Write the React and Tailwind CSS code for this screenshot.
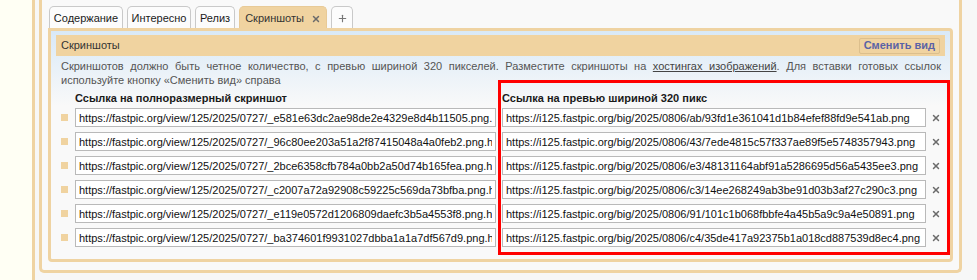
import { X, Plus } from "lucide-react";

const tabs = [
  { label: "Содержание", w: "w-[74px]" },
  { label: "Интересно", w: "w-[64px]" },
  { label: "Релиз", w: "w-[40px]" },
];

const rows = [
  ["https://fastpic.org/view/125/2025/0727/_e581e63dc2ae98de2e4329e8d4b11505.png.html", "https://i125.fastpic.org/big/2025/0806/ab/93fd1e361041d1b84efef88fd9e541ab.png"],
  ["https://fastpic.org/view/125/2025/0727/_96c80ee203a51a2f87415048a4a0feb2.png.html", "https://i125.fastpic.org/big/2025/0806/43/7ede4815c57f337ae89f5e5748357943.png"],
  ["https://fastpic.org/view/125/2025/0727/_2bce6358cfb784a0bb2a50d74b165fea.png.html", "https://i125.fastpic.org/big/2025/0806/e3/48131164abf91a5286695d56a5435ee3.png"],
  ["https://fastpic.org/view/125/2025/0727/_c2007a72a92908c59225c569da73bfba.png.html", "https://i125.fastpic.org/big/2025/0806/c3/14ee268249ab3be91d03b3af27c290c3.png"],
  ["https://fastpic.org/view/125/2025/0727/_e119e0572d1206809daefc3b5a4553f8.png.html", "https://i125.fastpic.org/big/2025/0806/91/101c1b068fbbfe4a45b5a9c9a4e50891.png"],
  ["https://fastpic.org/view/125/2025/0727/_ba374601f9931027dbba1a1a7df567d9.png.html", "https://i125.fastpic.org/big/2025/0806/c4/35de417a92375b1a018cd887539d8ec4.png"],
];

export default function App() {
  return (
    <div className="relative h-[280px] w-[977px] overflow-hidden bg-[#fffff4] pl-[32px] font-['Liberation_Sans',Arial,sans-serif] text-[11px] text-[#222]">
      <div className="h-full border-l-[3px] border-[#efd3a2] bg-[#f7f7f7] pl-[4px]">
        <div className="w-[923px] rounded-b-[5px] border-[3px] border-t-0 border-[#efd3a2] bg-[#f9f9f9] px-[6px] pt-[6px] pb-[8px]">
          {/* tabs */}
          <div className="flex h-[22px] gap-[4px] pl-px">
            {tabs.map((t) => (
              <div
                key={t.label}
                className={`${t.w} flex items-center justify-center rounded-t-[5px] border border-b-0 border-[#c9c9c9] bg-[#fcfcfc] pt-[2px] text-[#1a1a1a]`}
              >
                {t.label}
              </div>
            ))}
            <div className="flex w-[88px] items-center justify-center gap-[7px] rounded-t-[5px] border border-b-0 border-[#e8ca97] bg-[#f0d3a0] pt-[2px] text-[#333]">
              Скриншоты
              <X size={10} strokeWidth={3.5} className="text-[#6b6b6b]" />
            </div>
            <div className="flex w-[22px] items-center justify-center rounded-t-[5px] border border-b-0 border-[#c9c9c9] bg-[#fcfcfc] pt-[2px]">
              <Plus size={11} strokeWidth={2.5} className="text-[#777]" />
            </div>
          </div>

          {/* box */}
          <div className="rounded-[4px] rounded-tl-none border-[3px] border-[#efd3a2] bg-[linear-gradient(to_bottom,#d9e9f7,#f9f9f9_75px)] px-[5px] pt-[4px] pb-[12px]">
            <div className="flex h-[21px] items-center justify-between bg-[#f0d3a0] pl-[5px] pr-[5px]">
              <span className="text-[#333]">Скриншоты</span>
              <span className="flex h-[16px] items-center rounded-[2px] border border-[#dcbf8d] px-[4px] font-bold text-[#5b63a6]">
                Сменить вид
              </span>
            </div>

            <div className="mt-[3px] pl-[5px] pr-[4px] leading-[14px] text-[#555]">
              <div className="text-justify [text-align-last:justify]">
                Скриншотов должно быть четное количество, с превью шириной 320 пикселей. Разместите скриншоты на{" "}
                <span className="text-[#444] underline">хостингах изображений</span>. Для вставки готовых ссылок
              </div>
              <div>используйте кнопку «Сменить вид» справа</div>
            </div>

            <div className="mt-[4px] flex pl-[19px] font-bold leading-[14px] text-[#1a1a1a]">
              <div className="w-[427px]">Ссылка на полноразмерный скриншот</div>
              <div>Ссылка на превью шириной 320 пикс</div>
            </div>

            <div className="mt-[3px] flex flex-col gap-[5px] pl-[5px]">
              {rows.map(([full, thumb]) => (
                <div key={thumb} className="flex items-center">
                  <div className="w-[14px]">
                    <div className="h-[7px] w-[7px] bg-[#f0d3a0]" />
                  </div>
                  <input
                    readOnly
                    value={full}
                    className="h-[19px] w-[421px] border border-[#b9b9b9] bg-white px-[3px] text-[11px] text-[#111] outline-none"
                  />
                  <input
                    readOnly
                    value={thumb}
                    className="ml-[6px] h-[19px] w-[424px] border border-[#b9b9b9] bg-white px-[3px] text-[11px] text-[#111] outline-none"
                  />
                  <div className="flex flex-1 justify-center">
                    <X size={10} strokeWidth={3.5} className="text-[#6b6b6b]" />
                  </div>
                </div>
              ))}
            </div>
          </div>
        </div>
      </div>

      {/* annotation frame */}
      <div className="absolute left-[498px] top-[80px] h-[175px] w-[452px] border-[3px] border-[#ff0000]" />
    </div>
  );
}
